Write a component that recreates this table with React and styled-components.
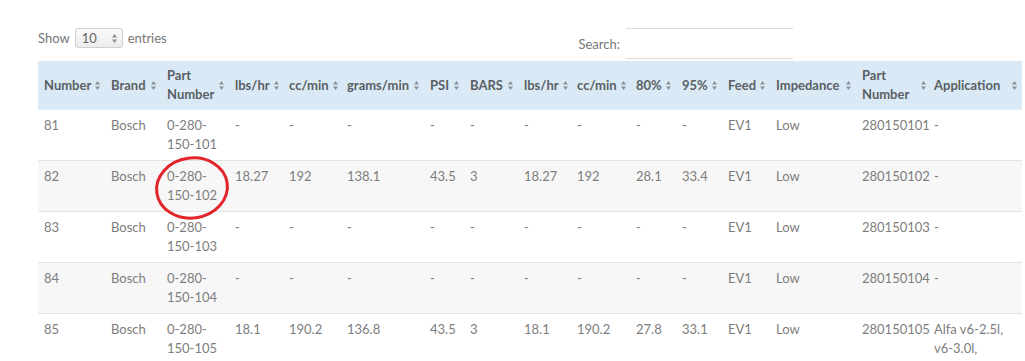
import React from "react";
import styled, { createGlobalStyle } from "styled-components";

const GlobalStyle = createGlobalStyle`
  body {
    margin: 0;
    background: #fff;
    font-family: Lato, "Open Sans", sans-serif;
    overflow: hidden;
  }
`;

const Page = styled.div`
  padding: 28px 0 0 38px;
  width: 1100px;
`;

const Controls = styled.div`
  display: flex;
  justify-content: space-between;
  align-items: flex-start;
  width: 755px;
  height: 33px;
  font-size: 13px;
  color: #777;
`;

const Length = styled.label`
  display: flex;
  align-items: center;
  gap: 5px;
  height: 20px;
`;

const Select = styled.div`
  display: flex;
  align-items: center;
  justify-content: space-between;
  box-sizing: border-box;
  width: 48px;
  height: 20px;
  padding: 0 5px 0 6px;
  border: 1px solid #cfcfcf;
  border-radius: 3px;
  background: linear-gradient(#fafafa, #ececec);
  color: #666;
`;

const SearchBox = styled.label`
  display: flex;
  align-items: center;
  gap: 6px;
  height: 31px;
`;

const SearchInput = styled.input`
  box-sizing: border-box;
  width: 167px;
  height: 31px;
  border: none;
  border-top: 1px solid #dcdcdc;
  border-bottom: 1px solid #dcdcdc;
  background: transparent;
  outline: none;
`;

const Table = styled.table`
  table-layout: fixed;
  width: 984px;
  border-collapse: collapse;
  font-size: 13px;
  line-height: 19px;
`;

const Th = styled.th`
  padding: 5px 5px 5px ${(p) => p.$pad}px;
  background: #d9eaf6;
  border-bottom: 1px solid #e6f0f8;
  color: #5b5f63;
  font-weight: 700;
  text-align: left;
  vertical-align: middle;
`;

const HeadInner = styled.div`
  display: flex;
  align-items: center;
  gap: 4px;
`;

const SortIcon = styled.svg`
  flex: none;
  margin-left: auto;
  width: 5px;
  height: 9px;
`;

const Row = styled.tr`
  background: ${(p) => (p.$striped ? "#f7f7f7" : "#fff")};
  border-top: 1px solid #e3e3e3;
`;

const Td = styled.td`
  position: relative;
  padding: 6px 6px 6px ${(p) => p.$pad}px;
  height: 38px;
  color: #7d7d7d;
  vertical-align: top;
  white-space: nowrap;
`;

const Mark = styled.svg`
  position: absolute;
  left: -6px;
  top: -4px;
  width: 74px;
  height: 62px;
  pointer-events: none;
  overflow: visible;
`;

// label, width, left padding
const columns = [
  ["Number", 67, 6],
  ["Brand", 56, 6],
  ["Part Number", 68, 6],
  ["lbs/hr", 54, 6],
  ["cc/min", 58, 6],
  ["grams/min", 83, 6],
  ["PSI", 40, 6],
  ["BARS", 54, 6],
  ["lbs/hr", 53, 6],
  ["cc/min", 59, 6],
  ["80%", 46, 6],
  ["95%", 46, 6],
  ["Feed", 48, 6],
  ["Impedance", 86, 6],
  ["Part Number", 75, 6],
  ["Application", 91, 3],
];

// multi-line cells are given as arrays of lines
const rows = [
  ["81", "Bosch", ["0-280-", "150-101"], "-", "-", "-", "-", "-", "-", "-", "-", "-", "EV1", "Low", "280150101", "-"],
  ["82", "Bosch", ["0-280-", "150-102"], "18.27", "192", "138.1", "43.5", "3", "18.27", "192", "28.1", "33.4", "EV1", "Low", "280150102", "-"],
  ["83", "Bosch", ["0-280-", "150-103"], "-", "-", "-", "-", "-", "-", "-", "-", "-", "EV1", "Low", "280150103", "-"],
  ["84", "Bosch", ["0-280-", "150-104"], "-", "-", "-", "-", "-", "-", "-", "-", "-", "EV1", "Low", "280150104", "-"],
  ["85", "Bosch", ["0-280-", "150-105"], "18.1", "190.2", "136.8", "43.5", "3", "18.1", "190.2", "27.8", "33.1", "EV1", "Low", "280150105", ["Alfa v6-2.5l,", "v6-3.0l,", "Lancia V6"]],
];

const Sort = () => (
  <SortIcon viewBox="0 0 5 9">
    <path d="M2.5 0 L5 3.4 L0 3.4 Z" fill="#8a9096" />
    <path d="M2.5 9 L5 5.6 L0 5.6 Z" fill="#8a9096" />
  </SortIcon>
);

const lines = (value) =>
  Array.isArray(value)
    ? value.map((line, i) => (
        <React.Fragment key={i}>
          {i > 0 && <br />}
          {line}
        </React.Fragment>
      ))
    : value;

const App = () => (
  <>
    <GlobalStyle />
    <Page>
      <Controls>
        <Length>
          Show
          <Select>
            <span>10</span>
            <Sort />
          </Select>
          entries
        </Length>
        <SearchBox>
          Search:
          <SearchInput type="search" />
        </SearchBox>
      </Controls>
      <Table>
        <colgroup>
          {columns.map(([, w], i) => (
            <col key={i} style={{ width: w }} />
          ))}
        </colgroup>
        <thead>
          <tr>
            {columns.map(([label, , pad], i) => (
              <Th key={i} $pad={pad}>
                <HeadInner>
                  <span>{label}</span>
                  <Sort />
                </HeadInner>
              </Th>
            ))}
          </tr>
        </thead>
        <tbody>
          {rows.map((row, r) => (
            <Row key={r} $striped={r % 2 === 1}>
              {row.map((cell, c) => (
                <Td key={c} $pad={columns[c][2]}>
                  {lines(cell)}
                  {r === 1 && c === 2 && (
                    <Mark viewBox="0 0 74 62">
                      <ellipse
                        cx="37"
                        cy="31"
                        rx="35.5"
                        ry="30"
                        fill="none"
                        stroke="#e2252b"
                        strokeWidth="3"
                        transform="rotate(-8 37 31)"
                      />
                    </Mark>
                  )}
                </Td>
              ))}
            </Row>
          ))}
        </tbody>
      </Table>
    </Page>
  </>
);

export default App;
